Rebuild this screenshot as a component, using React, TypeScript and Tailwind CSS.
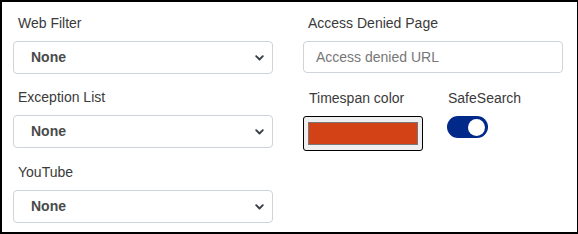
import React from "react";

function Chevron() {
  return (
    <svg width="9" height="6" viewBox="0 0 9 6" className="absolute right-[8px] top-1/2 -translate-y-1/2">
      <path d="M1.2 1.2l3.3 3.3 3.3-3.3" fill="none" stroke="#3a3f44" strokeWidth="1.9" strokeLinecap="round" strokeLinejoin="round" />
    </svg>
  );
}

function Select({ value }: { value: string }) {
  return (
    <div className="relative h-[33px] w-[260px] rounded-[4px] border border-[#ced4da] bg-white flex items-center pl-[17px]">
      <span className="text-[14px] font-bold text-[#4a4a4a]">{value}</span>
      <Chevron />
    </div>
  );
}

function Label({ children }: { children: React.ReactNode }) {
  return <div className="h-[20px] leading-[20px] text-[14px] text-[#3a3a3a] pl-[5px] mb-[8px]">{children}</div>;
}

export default function App() {
  return (
    <div
      className="w-[578px] h-[234px] bg-white border-l-2 border-t-2 border-b-2 border-r border-black flex pl-[11px] pt-[11px]"
      style={{ fontFamily: '"Liberation Sans", Arial, sans-serif' }}
    >
      <div className="w-[260px] flex flex-col">
        <Label>Web Filter</Label>
        <Select value="None" />
        <div className="mt-[13px]">
          <Label>Exception List</Label>
          <Select value="None" />
        </div>
        <div className="mt-[14px]">
          <Label>YouTube</Label>
          <Select value="None" />
        </div>
      </div>
      <div className="w-[260px] ml-[30px] flex flex-col">
        <Label>Access Denied Page</Label>
        <div className="h-[32px] w-[260px] rounded-[4px] border border-[#ced4da] bg-white flex items-center pl-[12px]">
          <span className="text-[14px] text-[#777]">Access denied URL</span>
        </div>
        <div className="flex mt-[15px]">
          <div className="w-[120px]">
            <div className="h-[20px] leading-[20px] text-[14px] text-[#3a3a3a] pl-[6px] mb-[8px]">Timespan color</div>
            <div className="h-[35px] w-[120px] rounded-[3px] border border-black bg-[#efefef] flex items-center justify-center">
              <div className="h-[23px] w-[110px] border border-[#777] bg-[#d24216]" />
            </div>
          </div>
          <div className="ml-[24px]">
            <div className="h-[20px] leading-[20px] text-[14px] text-[#3a3a3a] pl-[1px] mb-[8px]">SafeSearch</div>
            <div className="h-[22px] w-[41px] rounded-full bg-[#00298a] relative">
              <div className="absolute right-[3px] top-[3px] h-[17px] w-[17px] rounded-full bg-white" />
            </div>
          </div>
        </div>
      </div>
    </div>
  );
}
